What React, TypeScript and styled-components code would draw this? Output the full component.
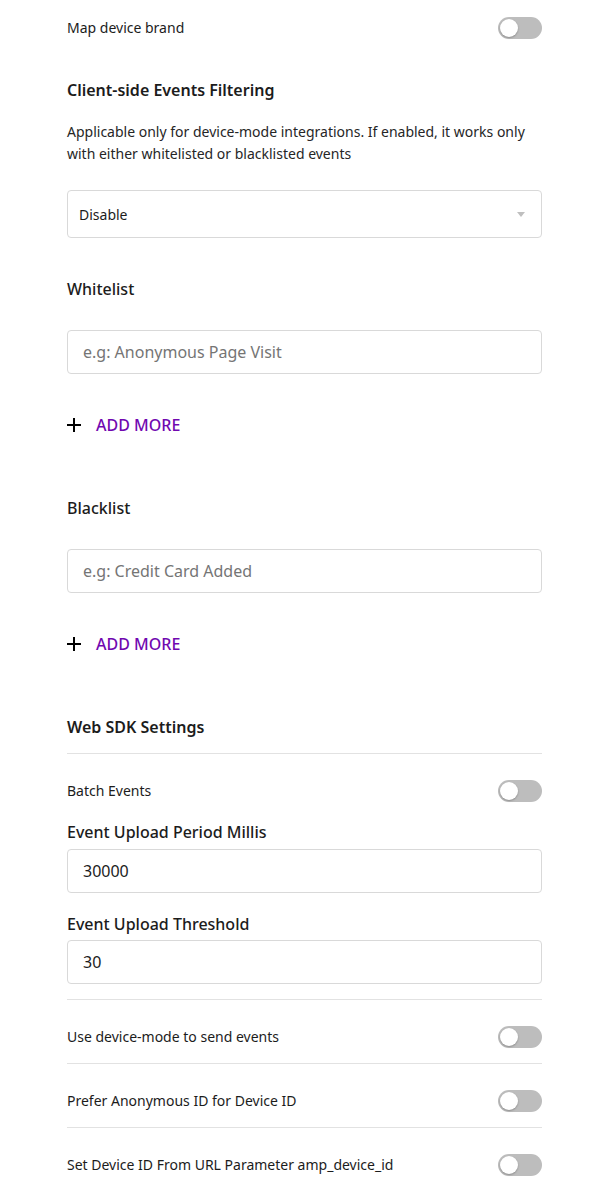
import React, { FC } from 'react';
import styled, { createGlobalStyle } from 'styled-components';

const GlobalStyle = createGlobalStyle`
    html, body {
        margin: 0;
        padding: 0;
        background: #ffffff;
    }
    body {
        font-family: "Noto Sans", "Open Sans", sans-serif;
        color: #1c1c1c;
    }
`;

const Page = styled.div`
    padding: 0 51px 40px 67px;
    display: flex;
    flex-direction: column;
`;

const ToggleRow = styled.div<{ $top?: number }>`
    display: flex;
    align-items: center;
    justify-content: space-between;
    height: 22px;
    margin-top: ${p => p.$top ?? 0}px;
    font-size: 14px;
    line-height: 22px;
`;

const DividedRow = styled.div<{ $first?: boolean }>`
    display: flex;
    align-items: center;
    justify-content: space-between;
    height: 22px;
    padding: 26px 0 15px;
    font-size: 14px;
    line-height: 22px;
    border-top: ${p => (p.$first ? 'none' : '1px solid #e2e2e2')};
`;

const Track = styled.span`
    position: relative;
    width: 44px;
    height: 22px;
    border-radius: 11px;
    background: #bdbdbd;
    flex-shrink: 0;
`;

const Knob = styled.span`
    position: absolute;
    top: 2px;
    left: 2px;
    width: 18px;
    height: 18px;
    border-radius: 50%;
    background: #ffffff;
    box-shadow: 0 1px 2px rgba(0, 0, 0, 0.25);
`;

const Heading = styled.div<{ $top: number }>`
    margin-top: ${p => p.$top}px;
    font-size: 16px;
    line-height: 24px;
    font-weight: 600;
`;

const Label = styled.div<{ $top: number }>`
    margin-top: ${p => p.$top}px;
    font-size: 16px;
    line-height: 24px;
    font-weight: 500;
`;

const Description = styled.p`
    margin: 19px 0 0;
    font-size: 14px;
    line-height: 22px;
    color: #262626;
`;

const Select = styled.div`
    margin-top: 25px;
    height: 46px;
    border: 1px solid #d9d9d9;
    border-radius: 4px;
    display: flex;
    align-items: center;
    justify-content: space-between;
    padding: 0 16px 0 11px;
    font-size: 14px;
`;

const Caret = styled.span`
    width: 0;
    height: 0;
    border-left: 4px solid transparent;
    border-right: 4px solid transparent;
    border-top: 5px solid #bfbfbf;
`;

const Input = styled.div<{ $top: number; $placeholder?: boolean }>`
    margin-top: ${p => p.$top}px;
    height: 42px;
    border: 1px solid #d9d9d9;
    border-radius: 4px;
    display: flex;
    align-items: center;
    padding: 0 15px;
    font-size: 16px;
    color: ${p => (p.$placeholder ? '#757575' : '#1c1c1c')};
`;

const AddMore = styled.div`
    margin-top: 39px;
    display: flex;
    align-items: center;
    gap: 15px;
    height: 24px;
    font-size: 16px;
    font-weight: 500;
    color: #7108b0;
`;

const Divider = styled.div<{ $top: number }>`
    margin-top: ${p => p.$top}px;
    height: 1px;
    background: #e2e2e2;
`;

const Toggle: FC = () => (
    <Track>
        <Knob />
    </Track>
);

const PlusIcon: FC = () => (
    <svg width="14" height="14" viewBox="0 0 14 14">
        <path d="M7 0v14M0 7h14" stroke="#000" strokeWidth="2" />
    </svg>
);

const App: FC = () => {
    return (
        <>
            <GlobalStyle />
            <Page>
                <ToggleRow $top={17}>
                    <span>Map device brand</span>
                    <Toggle />
                </ToggleRow>

                <Heading $top={39}>Client-side Events Filtering</Heading>
                <Description>
                    Applicable only for device-mode integrations. If enabled, it works only
                    with either whitelisted or blacklisted events
                </Description>
                <Select>
                    <span>Disable</span>
                    <Caret />
                </Select>

                <Label $top={39}>Whitelist</Label>
                <Input $top={29} $placeholder>e.g: Anonymous Page Visit</Input>
                <AddMore>
                    <PlusIcon />
                    ADD MORE
                </AddMore>

                <Label $top={59}>Blacklist</Label>
                <Input $top={29} $placeholder>e.g: Credit Card Added</Input>
                <AddMore>
                    <PlusIcon />
                    ADD MORE
                </AddMore>

                <Heading $top={59}>Web SDK Settings</Heading>
                <Divider $top={14} />
                <ToggleRow $top={26}>
                    <span>Batch Events</span>
                    <Toggle />
                </ToggleRow>

                <Label $top={18}>Event Upload Period Millis</Label>
                <Input $top={5}>30000</Input>
                <Label $top={19}>Event Upload Threshold</Label>
                <Input $top={4}>30</Input>

                <Divider $top={15} />
                <DividedRow $first>
                    <span>Use device-mode to send events</span>
                    <Toggle />
                </DividedRow>
                <DividedRow>
                    <span>Prefer Anonymous ID for Device ID</span>
                    <Toggle />
                </DividedRow>
                <DividedRow>
                    <span>Set Device ID From URL Parameter amp_device_id</span>
                    <Toggle />
                </DividedRow>
            </Page>
        </>
    );
};

export default App;
